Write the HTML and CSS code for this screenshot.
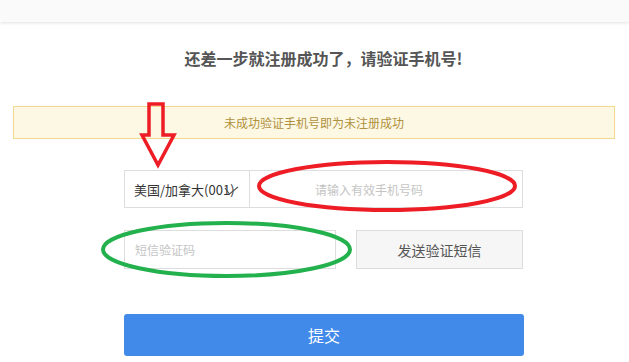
FILE: index.html
```html
<!DOCTYPE html>
<html lang="zh-CN">
<head>
<meta charset="utf-8">
<title>验证手机号</title>
<link rel="stylesheet" href="styles.css">
</head>
<body>
<div class="page">
  <header class="topbar"></header>
  <h1 class="title">还差一步就注册成功了，请验证手机号!</h1>
  <div class="notice">未成功验证手机号即为未注册成功</div>
  <form class="form">
    <div class="row phone-row">
      <div class="select">
        <span class="select-text">美国/加拿大(001)</span>
        <svg class="chev" width="16" height="10" viewBox="0 0 16 10"><polyline points="1,2 5.5,8 14,1" fill="none" stroke="#555" stroke-width="1.2"/></svg>
      </div>
      <div class="input phone-input"><span class="ph">请输入有效手机号码</span></div>
    </div>
    <div class="row sms-row">
      <div class="input sms-input"><span class="ph">短信验证码</span></div>
      <button type="button" class="send">发送验证短信</button>
    </div>
    <button type="button" class="submit">提交</button>
  </form>
  <svg class="marks" width="629" height="362" viewBox="0 0 629 362">
    <polygon points="149,104 163,104 163,135 174,135 158,165 142,135 149,135" fill="none" stroke="#ee1c25" stroke-width="3.5" stroke-linejoin="miter"/>
    <ellipse cx="387" cy="186" rx="128" ry="24" fill="none" stroke="#ee1c25" stroke-width="4"/>
    <ellipse cx="226.5" cy="249.5" rx="123.5" ry="26.5" fill="none" stroke="#22b14c" stroke-width="4"/>
  </svg>
</div>
</body>
</html>
```
FILE: styles.css
```css
* { box-sizing: border-box; }
html, body { margin: 0; padding: 0; background: #fff; }
body {
  font-family: "Noto Sans CJK SC", "Microsoft YaHei", "Liberation Sans", sans-serif;
  color: #333;
}
.page {
  position: relative;
  width: 629px;
  height: 362px;
  overflow: hidden;
}
.topbar {
  height: 22px;
  background: #fafafa;
  box-shadow: 0 1px 3px rgba(0,0,0,0.12);
}
.title {
  margin: 26px 0 0;
  padding-left: 18px;
  font-size: 16px;
  line-height: 20px;
  font-weight: bold;
  color: #555;
  text-align: center;
}
.notice {
  margin: 38px 14px 0 13px;
  height: 33px;
  line-height: 31px;
  border: 1px solid #f2d98c;
  background: #fdf8e4;
  color: #b0913d;
  font-size: 12px;
  text-align: center;
}
.form {
  width: 400px;
  margin: 31px 0 0 124px;
  display: flex;
  flex-direction: column;
}
.row {
  display: flex;
}
.phone-row { height: 38px; }
.select {
  position: relative;
  width: 126px;
  border: 1px solid #ddd;
  display: flex;
  align-items: center;
  padding-left: 9px;
  font-size: 13px;
  color: #333;
  white-space: nowrap;
  overflow: hidden;
}
.chev {
  position: absolute;
  left: 99px;
  top: 15px;
}
.input {
  border: 1px solid #ddd;
  display: flex;
  align-items: center;
  font-size: 12px;
}
.ph { color: #c4c4c4; }
.phone-input {
  width: 273px;
  border-left: none;
  padding-left: 65px;
}
.sms-row {
  margin-top: 22px;
  height: 39px;
  justify-content: space-between;
}
.sms-input {
  width: 212px;
  padding-left: 10px;
}
.send {
  width: 167px;
  margin-right: 1px;
  border: 1px solid #ddd;
  background: #f6f6f6;
  color: #555;
  font-family: inherit;
  font-size: 14px;
  padding: 0;
}
.submit {
  margin-top: 45px;
  height: 42px;
  border: none;
  border-radius: 3px;
  background: #418aea;
  color: #fff;
  font-family: inherit;
  font-size: 16px;
  padding: 0;
}
.marks {
  position: absolute;
  top: 0;
  left: 0;
  pointer-events: none;
}
```
